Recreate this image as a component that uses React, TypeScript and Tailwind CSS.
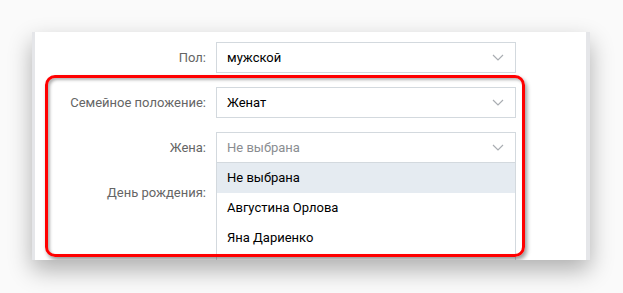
import React from "react"

const Chevron = () => (
  <svg width="12" height="7" viewBox="0 0 12 7" className="shrink-0">
    <path d="M1 1l5 5 5-5" fill="none" stroke="#a9adb2" strokeWidth="1.2" />
  </svg>
)

type SelectProps = {
  value: string
  placeholder?: boolean
  open?: boolean
}

const Select = ({ value, placeholder, open }: SelectProps) => {
  return (
    <div className="relative w-[300px]">
      <div className="h-[31px] flex items-center justify-between pl-[10px] pr-[11px] border border-[#d3d9de] bg-white">
        <span className={placeholder ? "text-[#8a8d91]" : "text-black"}>{value}</span>
        <Chevron />
      </div>
      {open && (
        <div className="absolute left-0 top-[30px] w-[300px] bg-white border-x border-t border-[#d3d9de] z-10">
          <div className="h-[30px] flex items-center pl-[10px] bg-[#e5ebf1] text-black">Не выбрана</div>
          <div className="h-[30px] flex items-center pl-[10px] text-black">Августина Орлова</div>
          <div className="h-[30px] flex items-center pl-[10px] text-black">Яна Дариенко</div>
          <div className="h-[30px]" />
        </div>
      )}
    </div>
  )
}

const Row = ({ label, children }: { label: string; children?: React.ReactNode }) => (
  <div className="flex items-center h-[31px]">
    <div className="w-[171px] text-right text-[#656565]">{label}</div>
    <div className="ml-[10px]">{children}</div>
  </div>
)

export default function App() {
  return (
    <div
      className="w-[623px] h-[293px] bg-[#fafafa] pt-[32px] pl-[32px] overflow-hidden text-[13px]"
      style={{ fontFamily: "Roboto, 'Liberation Sans', sans-serif" }}
    >
      <div className="relative w-[558px] h-[228px] bg-white border-l-[3px] border-r-[4px] border-[#e5e6e9] shadow-[0_10px_22px_rgba(0,0,0,0.3)] overflow-hidden">
        <div className="flex flex-col pt-[10px] gap-[14px]">
          <Row label="Пол:">
            <Select value="мужской" />
          </Row>
          <Row label="Семейное положение:">
            <Select value="Женат" />
          </Row>
          <Row label="Жена:">
            <Select value="Не выбрана" placeholder open />
          </Row>
          <Row label="День рождения:" />
        </div>

        {/* annotation frame */}
        <div className="absolute left-[10px] top-[43px] w-[480px] h-[182px] rounded-[10px] border-[3px] border-[#ff0000] shadow-[2px_3px_4px_rgba(0,0,0,0.4),inset_2px_2px_3px_rgba(0,0,0,0.3)] z-20 pointer-events-none" />
      </div>
    </div>
  )
}
